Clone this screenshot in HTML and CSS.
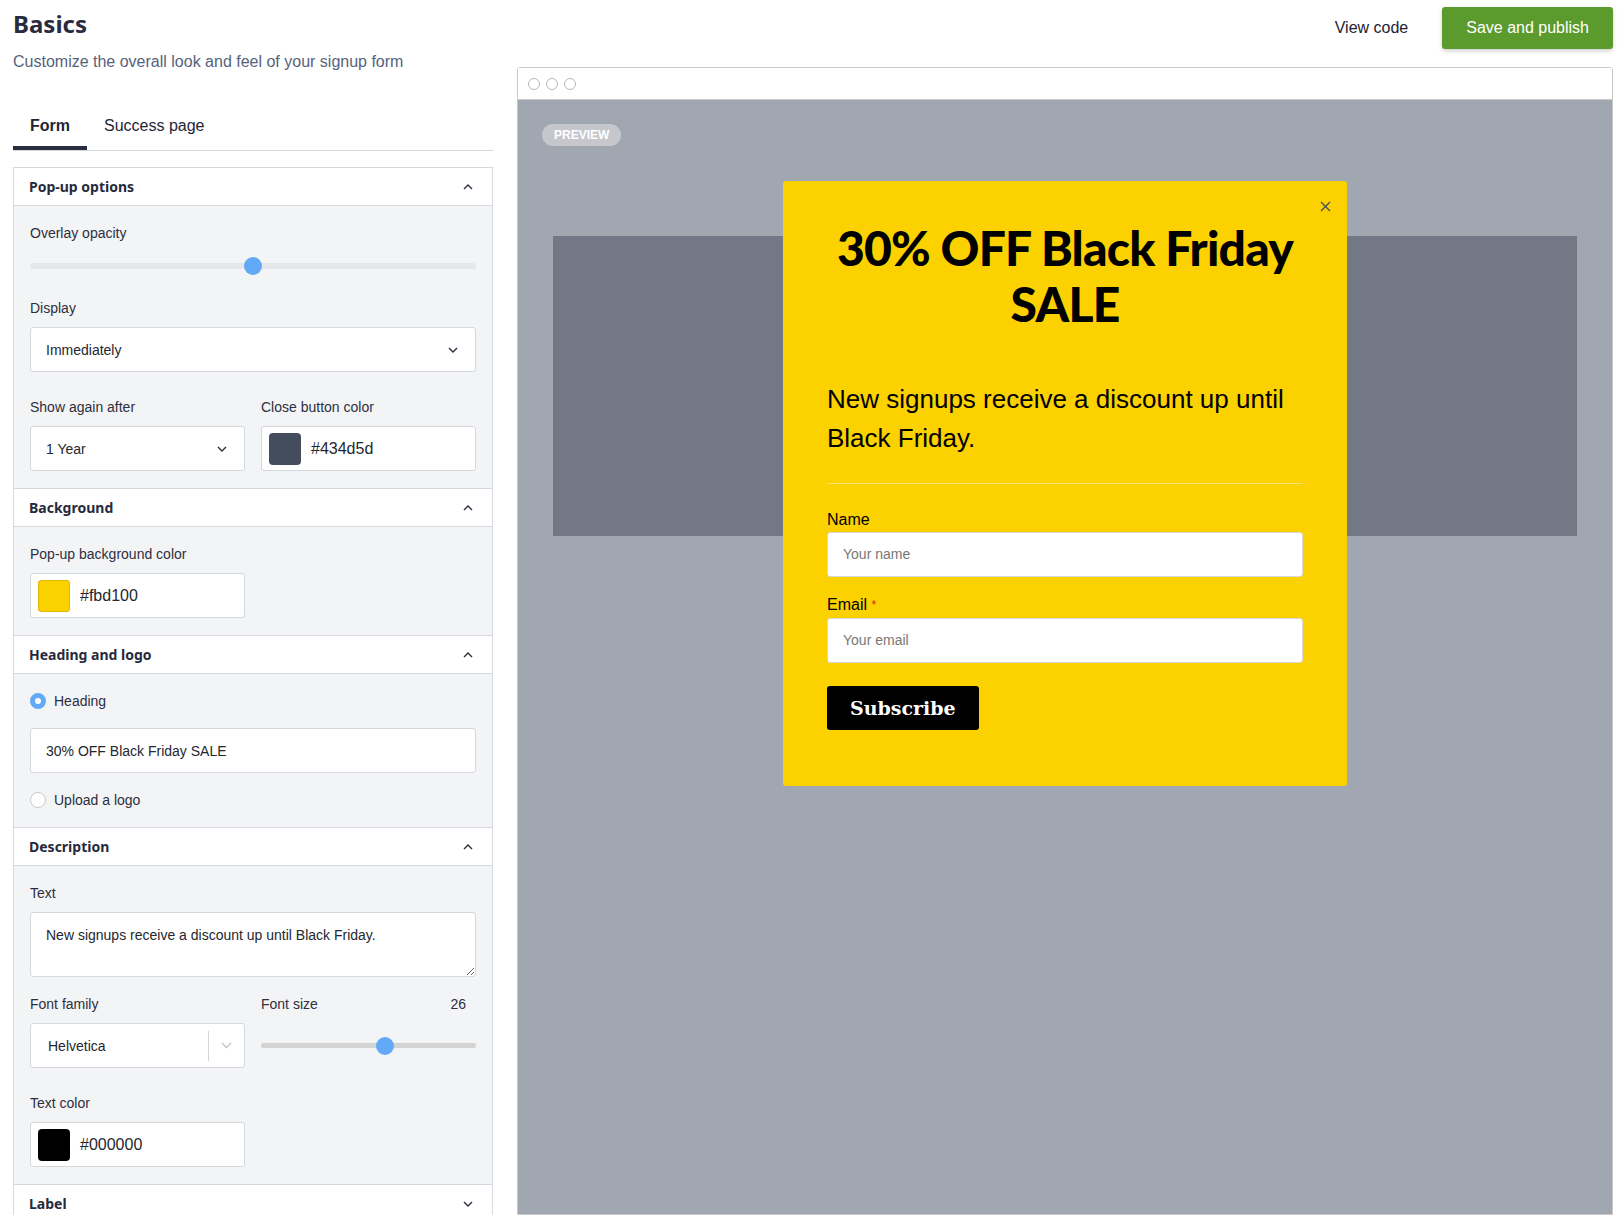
FILE: index.html
```html
<!DOCTYPE html>
<html lang="en">
<head>
	<meta charset="UTF-8">
	<title>Basics - Signup form</title>
	<link rel="stylesheet" href="styles.css">
</head>
<body>
	<div class="page">
		<aside class="sidebar">
			<h1 class="title">Basics</h1>
			<p class="subtitle">Customize the overall look and feel of your signup form</p>

			<nav class="tabs">
				<a class="tab active">Form</a>
				<a class="tab">Success page</a>
			</nav>

			<div class="panel">
				<!-- pop-up options -->
				<section class="section">
					<header class="section-head">
						<span>Pop-up options</span>
						<svg class="chev" width="10" height="6" viewBox="0 0 10 6"><polyline points="1,5 5,1 9,5"/></svg>
					</header>
					<div class="section-body">
						<label class="label">Overlay opacity</label>
						<div class="range range-light">
							<div class="range-track"></div>
							<span class="range-thumb" style="left: 50%"></span>
						</div>

						<label class="label">Display</label>
						<div class="select field">
							<span>Immediately</span>
							<svg class="chev" width="10" height="6" viewBox="0 0 10 6"><polyline points="1,1 5,5 9,1"/></svg>
						</div>

						<div class="cols">
							<div>
								<label class="label">Show again after</label>
								<div class="select">
									<span>1 Year</span>
									<svg class="chev" width="10" height="6" viewBox="0 0 10 6"><polyline points="1,1 5,5 9,1"/></svg>
								</div>
							</div>
							<div>
								<label class="label">Close button color</label>
								<div class="color">
									<span class="swatch swatch-slate"></span>
									<span>#434d5d</span>
								</div>
							</div>
						</div>
					</div>
				</section>

				<!-- background -->
				<section class="section">
					<header class="section-head">
						<span>Background</span>
						<svg class="chev" width="10" height="6" viewBox="0 0 10 6"><polyline points="1,5 5,1 9,5"/></svg>
					</header>
					<div class="section-body">
						<label class="label">Pop-up background color</label>
						<div class="color half">
							<span class="swatch swatch-yellow"></span>
							<span>#fbd100</span>
						</div>
					</div>
				</section>

				<!-- heading -->
				<section class="section">
					<header class="section-head">
						<span>Heading and logo</span>
						<svg class="chev" width="10" height="6" viewBox="0 0 10 6"><polyline points="1,5 5,1 9,5"/></svg>
					</header>
					<div class="section-body">
						<div class="radio checked"><span class="radio-dot"></span>Heading</div>
						<div class="input field-tight">30% OFF Black Friday SALE</div>
						<div class="radio"><span class="radio-dot"></span>Upload a logo</div>
					</div>
				</section>

				<!-- description -->
				<section class="section">
					<header class="section-head">
						<span>Description</span>
						<svg class="chev" width="10" height="6" viewBox="0 0 10 6"><polyline points="1,5 5,1 9,5"/></svg>
					</header>
					<div class="section-body">
						<label class="label">Text</label>
						<textarea class="textarea">New signups receive a discount up until Black Friday.</textarea>

						<div class="cols">
							<div>
								<label class="label">Font family</label>
								<div class="select rselect">
									<span>Helvetica</span>
									<span class="rselect-sep"></span>
									<svg class="chev chev-light" width="11" height="7" viewBox="0 0 11 7"><polyline points="1,1 5.5,5.5 10,1"/></svg>
								</div>
							</div>
							<div>
								<label class="label label-row"><span>Font size</span><span>26</span></label>
								<div class="range range-dark">
									<div class="range-track"></div>
									<span class="range-thumb" style="left: 57.7%"></span>
								</div>
							</div>
						</div>

						<label class="label">Text color</label>
						<div class="color half">
							<span class="swatch swatch-black"></span>
							<span>#000000</span>
						</div>
					</div>
				</section>

				<section class="section">
					<header class="section-head">
						<span>Label</span>
						<svg class="chev" width="10" height="6" viewBox="0 0 10 6"><polyline points="1,1 5,5 9,1"/></svg>
					</header>
				</section>
			</div>
		</aside>

		<main class="editor">
			<div class="actions">
				<a class="btn-link">View code</a>
				<a class="btn-primary">Save and publish</a>
			</div>

			<div class="browser">
				<div class="browser-bar">
					<span class="dot"></span>
					<span class="dot"></span>
					<span class="dot"></span>
				</div>
				<div class="preview">
					<span class="preview-badge">PREVIEW</span>
					<div class="mock-page"></div>

					<div class="popup">
						<svg class="popup-close" width="11" height="11" viewBox="0 0 11 11"><path d="M1 1L10 10M10 1L1 10"/></svg>
						<h2 class="popup-title">30% OFF Black Friday SALE</h2>
						<p class="popup-text">New signups receive a discount up until Black Friday.</p>
						<hr class="popup-rule">
						<label class="popup-label">Name</label>
						<div class="popup-input">Your name</div>
						<label class="popup-label">Email <span class="req">*</span></label>
						<div class="popup-input">Your email</div>
						<a class="popup-btn">Subscribe</a>
					</div>
				</div>
			</div>
		</main>
	</div>
</body>
</html>
```

FILE: styles.css
```css
*{
	margin: 0;
	padding: 0;
	box-sizing: border-box;
}
html,body{
	width: 100%;
	height: 100%;
	overflow: hidden;
	background: #fff;
	font-family: "Liberation Sans", Arial, sans-serif;
	color: #2d2f3e;
}
.page{
	display: flex;
	gap: 24px;
	height: 100vh;
	padding: 0 8px 10px 13px;
}

/* left column */
.sidebar{
	width: 480px;
	flex: none;
	overflow: hidden;
}
.title{
	margin-top: 8px;
	font-family: "Noto Sans", sans-serif;
	font-size: 24px;
	line-height: 32px;
	font-weight: 700;
	color: #282b3f;
}
.subtitle{
	margin-top: 10px;
	font-size: 16px;
	line-height: 24px;
	color: #56637c;
}
.tabs{
	display: flex;
	margin-top: 30px;
	border-bottom: 1px solid #d3d6dc;
}
.tab{
	padding: 12px 17px 10px;
	font-size: 16px;
	line-height: 20px;
	color: #232536;
	border-bottom: 4px solid transparent;
}
.tab.active{
	font-weight: 700;
	border-bottom-color: #2a2c40;
}
.panel{
	margin-top: 16px;
	border: 1px solid #d6d9df;
	border-bottom: 0;
}
.section-head{
	display: flex;
	align-items: center;
	justify-content: space-between;
	height: 38px;
	padding: 0 19px 0 15px;
	background: #fff;
	border-bottom: 1px solid #d6d9df;
	font-family: "Noto Sans", sans-serif;
	font-size: 14px;
	font-weight: 700;
	color: #272a3c;
}
.chev{
	fill: none;
	stroke: #2b2e3c;
	stroke-width: 1.4;
}
.chev-light{
	stroke: #c4c4c4;
}
.section-body{
	padding: 17px 16px 17px;
	background: #f3f4f6;
	border-bottom: 1px solid #d6d9df;
}
.label{
	display: block;
	font-size: 14px;
	line-height: 20px;
	margin-bottom: 9px;
	color: #2d2f3e;
}
.label-row{
	display: flex;
	justify-content: space-between;
	padding-right: 10px;
}

.range{
	position: relative;
	height: 24px;
	margin: 11px 0 20px;
}
.range-track{
	position: absolute;
	left: 0;
	right: 0;
	top: 9px;
	height: 6px;
	border-radius: 3px;
	background: #e6e7ea;
}
.range-dark{
	margin: 0;
	height: 45px;
}
.range-dark .range-track{
	top: 20px;
	height: 5px;
	background: #d3d3d3;
}
.range-thumb{
	position: absolute;
	top: 50%;
	width: 18px;
	height: 18px;
	margin: -9px 0 0 -9px;
	border-radius: 50%;
	background: #62a9f8;
}

.select, .color, .input{
	display: flex;
	align-items: center;
	height: 45px;
	background: #fff;
	border: 1px solid #d4d7dd;
	border-radius: 3px;
	font-size: 14px;
	color: #25272f;
}
.select{
	justify-content: space-between;
	padding: 0 17px 0 15px;
}
.input{
	padding: 0 15px;
}
.field{
	margin-bottom: 25px;
}
.field-tight{
	margin: 17px 0;
}
.rselect{
	padding: 0 12px 0 17px;
}
.rselect span:first-child{
	flex: 1;
}
.rselect-sep{
	width: 1px;
	height: 30px;
	background: #d4d4d4;
	margin-right: 12px;
}
.color{
	gap: 10px;
	padding: 0 7px;
	font-size: 16px;
}
.half{
	width: 215px;
}
.swatch{
	width: 32px;
	height: 32px;
	border-radius: 4px;
}
.swatch-slate{
	background: #434d5d;
}
.swatch-yellow{
	background: #fbd100;
	box-shadow: inset 0 0 0 1px #e0b800;
}
.swatch-black{
	background: #000;
}
.cols{
	display: grid;
	grid-template-columns: 1fr 1fr;
	gap: 16px;
	margin-bottom: 25px;
}
.section:first-child .cols{
	margin-bottom: 0;
}
.radio{
	display: flex;
	align-items: center;
	gap: 8px;
	height: 20px;
	font-size: 14px;
	color: #2d2f3e;
}
.radio-dot{
	width: 16px;
	height: 16px;
	border-radius: 50%;
	background: #fff;
	border: 1px solid #c6c9cf;
}
.radio.checked .radio-dot{
	border: 5px solid #62a9f8;
	box-shadow: inset 0 0 0 3px #fff;
	background: #fff;
}
.textarea{
	display: block;
	width: 100%;
	height: 65px;
	padding: 12px 15px;
	margin-bottom: 17px;
	border: 1px solid #d4d7dd;
	border-radius: 3px;
	font-family: "Liberation Sans", Arial, sans-serif;
	font-size: 14px;
	line-height: 20px;
	color: #25272f;
	resize: vertical;
}

/* right column */
.editor{
	flex: 1;
	display: flex;
	flex-direction: column;
}
.actions{
	display: flex;
	align-items: center;
	justify-content: flex-end;
	gap: 18px;
	padding-top: 7px;
	margin-bottom: 18px;
}
.btn-link{
	padding: 0 16px;
	font-size: 16px;
	color: #1f2233;
}
.btn-primary{
	height: 42px;
	line-height: 42px;
	padding: 0 24px;
	border-radius: 3px;
	background: #5b9a2d;
	color: #fff;
	font-size: 16px;
	box-shadow: 0 2px 4px rgba(0,0,0,.18);
}
.browser{
	flex: 1;
	display: flex;
	flex-direction: column;
	border: 1px solid #c9c9c9;
	border-radius: 3px 3px 0 0;
}
.browser-bar{
	display: flex;
	align-items: center;
	gap: 6px;
	height: 32px;
	padding-left: 10px;
	border-bottom: 1px solid #c9c9c9;
	background: #fff;
}
.dot{
	width: 12px;
	height: 12px;
	border-radius: 50%;
	border: 1px solid #b8b8b8;
}
.preview{
	position: relative;
	flex: 1;
	background: #a1a7b0;
	padding-top: 136px;
}
.preview-badge{
	position: absolute;
	left: 24px;
	top: 24px;
	height: 22px;
	padding: 0 12px;
	line-height: 22px;
	border-radius: 11px;
	background: #c5c7cc;
	color: #fff;
	font-size: 12px;
	font-weight: 700;
}
.mock-page{
	height: 300px;
	margin: 0 35px 0 35px;
	background: #727885;
}

.popup{
	position: absolute;
	top: 81px;
	left: 50%;
	width: 564px;
	margin-left: -282px;
	padding: 39px 44px 56px;
	border-radius: 3px;
	background: #fbd100;
	color: #000;
}
.popup-close{
	position: absolute;
	top: 20px;
	right: 16px;
	fill: none;
	stroke: #434d5d;
	stroke-width: 1.3;
}
.popup-title{
	font-family: Lato, sans-serif;
	font-weight: 900;
	font-size: 48px;
	line-height: 56px;
	text-align: center;
	letter-spacing: -0.8px;
}
.popup-text{
	margin-top: 48px;
	font-size: 26px;
	line-height: 39px;
}
.popup-rule{
	margin-top: 25px;
	border: 0;
	border-top: 1px solid #f7e27c;
}
.popup-label{
	display: block;
	margin-top: 25px;
	font-size: 16px;
	line-height: 22px;
	margin-bottom: 1px;
}
.popup-label + .popup-input + .popup-label{
	margin-top: 17px;
	margin-bottom: 2px;
}
.req{
	color: #e02020;
	font-size: 12px;
	vertical-align: top;
}
.popup-input{
	height: 45px;
	line-height: 43px;
	padding: 0 15px;
	background: #fff;
	border: 1px solid #d8d8d8;
	border-radius: 3px;
	font-size: 14px;
	color: #777;
}
.popup-btn{
	display: inline-block;
	margin-top: 23px;
	height: 44px;
	line-height: 44px;
	padding: 0 23px;
	border-radius: 3px;
	background: #000;
	color: #fff;
	font-family: "DejaVu Serif", serif;
	font-weight: 700;
	font-size: 19px;
}
```
